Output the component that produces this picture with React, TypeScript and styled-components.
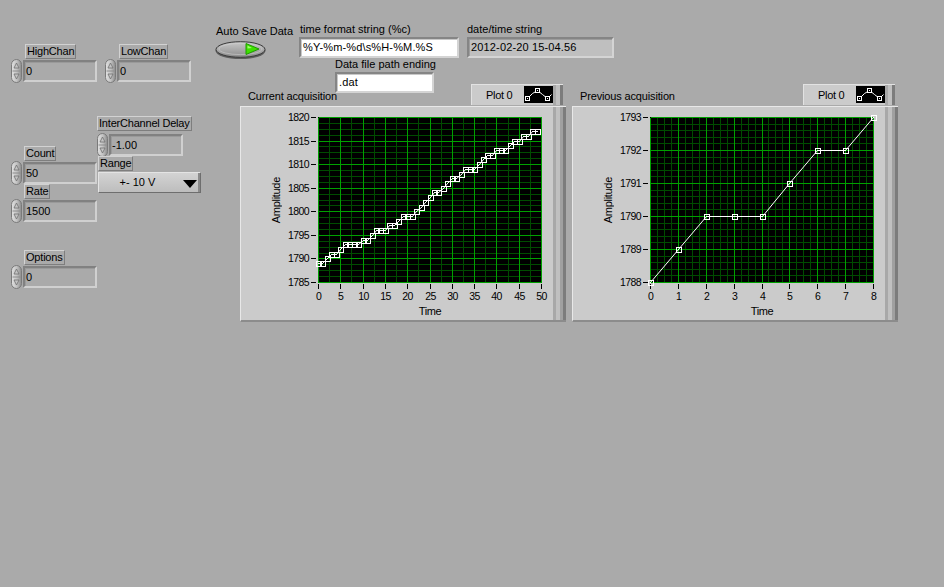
import React from "react";
import styled, { createGlobalStyle } from "styled-components";

const GlobalStyle = createGlobalStyle`
  html, body { margin: 0; padding: 0; background: #aaaaaa; }
  body { font-family: "Liberation Sans", Arial, sans-serif; font-size: 11px; color: #000; }
  * { box-sizing: border-box; }
`;

const Panel = styled.div`
  width: 944px;
  height: 587px;
  display: flex;
  align-items: flex-start;
  background: #aaaaaa;
  overflow: hidden;
`;

/* ---------- left numeric controls ---------- */
const ControlsArea = styled.div`
  width: 215px;
  flex-shrink: 0;
  display: flex;
  align-items: flex-start;
`;

const ControlColumn = styled.div<{ $width: number; $padLeft?: number }>`
  width: ${(p) => p.$width}px;
  padding-left: ${(p) => p.$padLeft ?? 0}px;
  display: flex;
  flex-direction: column;
  align-items: flex-start;
`;

const ControlBlock = styled.div<{ $top: number; $left?: number }>`
  margin-top: ${(p) => p.$top}px;
  margin-left: ${(p) => p.$left ?? 0}px;
  display: flex;
  flex-direction: column;
  align-items: flex-start;
`;

const OwnedLabel = styled.div<{ $indent: number }>`
  height: 15px;
  line-height: 13px;
  padding: 0 1px;
  margin-left: ${(p) => p.$indent}px;
  border: 1px solid;
  border-color: #d2d2d2 #7e7e7e #7e7e7e #d2d2d2;
  letter-spacing: -0.2px;
  white-space: nowrap;
`;

const FieldRow = styled.div<{ $gap: number }>`
  display: flex;
  align-items: center;
  gap: 1px;
  margin-top: ${(p) => p.$gap}px;
`;

const SpinnerBox = styled.div`
  width: 11px;
  height: 24px;
  display: flex;
  svg { display: block; }
`;

const NumField = styled.div`
  width: 74px;
  height: 22px;
  background: #aaaaaa;
  border: 2px solid;
  border-color: #818181 #d0d0d0 #d0d0d0 #818181;
  box-shadow: inset 1px 1px 0 #9a9a9a;
  display: flex;
  align-items: center;
  padding-left: 1px;
  white-space: nowrap;
`;

const Ring = styled.div`
  width: 103px;
  height: 21px;
  margin-top: 1px;
  display: flex;
  align-items: stretch;
  background: linear-gradient(#d3d3d3, #bdbdbd);
  border: 1px solid;
  border-color: #e4e4e4 #6e6e6e #6e6e6e #e4e4e4;
`;

const RingText = styled.div`
  flex: 1;
  display: flex;
  align-items: center;
  justify-content: center;
  padding-bottom: 1px;
  white-space: nowrap;
`;

const RingArrow = styled.div`
  width: 24px;
  display: flex;
  align-items: center;
  justify-content: flex-end;
  padding: 3px 1px 0 0;
  border-right: 2px solid #8a8a8a;
`;

const DownTriangle = styled.div`
  width: 0;
  height: 0;
  border-left: 7px solid transparent;
  border-right: 7px solid transparent;
  border-top: 8px solid #000;
`;

/* ---------- right area ---------- */
const RightArea = styled.div`
  flex: 1;
  display: flex;
  flex-direction: column;
`;

const TopSection = styled.div`
  height: 84px;
  padding-top: 23px;
  display: flex;
  align-items: flex-start;
`;

const AutoSaveGroup = styled.div`
  width: 84px;
  margin-top: 2px;
  display: flex;
  flex-direction: column;
  align-items: flex-start;
  svg { display: block; margin-top: 3px; }
`;

const FreeLabel = styled.div<{ $left?: number }>`
  line-height: 13px;
  height: 13px;
  padding-left: ${(p) => p.$left ?? 0}px;
  white-space: nowrap;
`;

const StringGroup = styled.div<{ $width: number; $left?: number }>`
  width: ${(p) => p.$width}px;
  margin-left: ${(p) => p.$left ?? 0}px;
  display: flex;
  flex-direction: column;
  align-items: flex-start;
`;

const StringField = styled.div<{ $width: number; $indicator?: boolean; $left?: number }>`
  width: ${(p) => p.$width}px;
  height: 21px;
  margin-top: 1px;
  margin-left: ${(p) => p.$left ?? 0}px;
  background: ${(p) => (p.$indicator ? "#bfbfbf" : "#ffffff")};
  border: 2px solid;
  border-color: #858585 #d4d4d4 #d4d4d4 #858585;
  box-shadow: inset 1px 1px 0 ${(p) => (p.$indicator ? "#9c9c9c" : "#c8c8c8")};
  display: flex;
  align-items: center;
  padding: 0 0 2px 2px;
  letter-spacing: 0.15px;
  white-space: nowrap;
`;

const GraphRow = styled.div`
  display: flex;
  gap: 6px;
  margin-left: 25px;
`;

const Graph = styled.div`
  width: 326px;
  display: flex;
  flex-direction: column;
`;

const GraphHeader = styled.div`
  height: 22px;
  display: flex;
  justify-content: space-between;
  align-items: flex-end;
  padding: 0 3px 0 8px;
`;

const GraphTitle = styled.div`
  line-height: 13px;
  margin-bottom: 3px;
  letter-spacing: -0.15px;
  white-space: nowrap;
`;

const Legend = styled.div`
  width: 92px;
  height: 21px;
  margin-bottom: 1px;
  display: flex;
  background: #cbcbcb;
  border-top: 1px solid #e2e2e2;
  border-left: 1px solid #e2e2e2;
`;

const LegendName = styled.div`
  flex: 1;
  display: flex;
  align-items: center;
  padding-left: 14px;
  letter-spacing: -0.3px;
  white-space: nowrap;
`;

const LegendIcon = styled.div`
  width: 29px;
  height: 17px;
  margin-top: 1px;
  background: #000;
  svg { display: block; }
`;

const EdgeStrip = styled.div<{ $width: number }>`
  width: ${(p) => p.$width}px;
  flex-shrink: 0;
  background: linear-gradient(
    to right,
    #a8a8a8 0 3px,
    #c0c0c0 3px 7px,
    #a0a0a0 7px ${(p) => p.$width - 3}px,
    #7c7c7c ${(p) => p.$width - 3}px
  );
`;

const GraphFrame = styled.div`
  width: 326px;
  height: 216px;
  display: flex;
  background: #cbcbcb;
  border-top: 1px solid #e8e8e8;
  border-left: 1px solid #e8e8e8;
  border-bottom: 2px solid #8c8c8c;
`;

const FrameBody = styled.div`
  width: 312px;
  display: flex;
  flex-direction: column;
`;

const ChartRow = styled.div`
  display: flex;
  height: 196px;
  svg { display: block; }
`;

const AxisTitleY = styled.div`
  width: 44px;
  height: 196px;
  padding: 10px 2px 20px 0;
  display: flex;
  align-items: center;
  justify-content: flex-end;
  span {
    writing-mode: vertical-rl;
    transform: rotate(180deg);
    line-height: 13px;
    letter-spacing: -0.3px;
    white-space: nowrap;
  }
`;

const AxisTitleX = styled.div`
  margin-top: 2px;
  margin-left: 77px;
  width: 224px;
  line-height: 13px;
  text-align: center;
  letter-spacing: -0.4px;
`;

/* ---------- drawings ---------- */
const Spinner = () => (
  <SpinnerBox>
    <svg width="11" height="24" viewBox="0 0 11 24">
      <defs>
        <linearGradient id="spinGrad" x1="0" y1="0" x2="1" y2="0">
          <stop offset="0" stopColor="#e2e2e2" />
          <stop offset="0.55" stopColor="#c0c0c0" />
          <stop offset="1" stopColor="#8a8a8a" />
        </linearGradient>
      </defs>
      <rect x="0.5" y="0.5" width="10" height="23" rx="5" fill="url(#spinGrad)" stroke="#7a7a7a" />
      <line x1="1.5" y1="12" x2="9.5" y2="12" stroke="#8c8c8c" />
      <path d="M5.5 4 L8 9 L3 9 Z" fill="#c4c4c4" stroke="#707070" strokeWidth="0.8" />
      <path d="M5.5 20 L8 15 L3 15 Z" fill="#c4c4c4" stroke="#707070" strokeWidth="0.8" />
    </svg>
  </SpinnerBox>
);

const AutoSaveButton = () => (
  <svg width="52" height="19" viewBox="0 0 52 19">
    <defs>
      <linearGradient id="btnGrad" x1="0" y1="0" x2="0" y2="1">
        <stop offset="0" stopColor="#c8c8c8" />
        <stop offset="0.6" stopColor="#a4a4a4" />
        <stop offset="1" stopColor="#8a8a8a" />
      </linearGradient>
    </defs>
    <ellipse cx="25.5" cy="9.8" rx="25" ry="8.3" fill="#5e5e5e" />
    <ellipse cx="25.5" cy="8.5" rx="24.5" ry="7.8" fill="url(#btnGrad)" stroke="#3a3a3a" />
    <ellipse cx="25.5" cy="8" rx="21.5" ry="5.6" fill="none" stroke="#d2d2d2" strokeOpacity="0.55" />
    <polygon points="31,2.5 44,8 31,13.5" fill="#3ee000" stroke="#1f9a00" strokeWidth="1" />
    <polygon points="32.5,4.5 37,7 32.5,7.5" fill="#9dff6a" />
  </svg>
);

const LegendGlyph = () => (
  <svg width="29" height="17" viewBox="0 0 29 17">
    <polyline points="3.5,12.5 8.5,7.5 13.5,4.5 18.5,8.5 23.5,12.5 27.5,8.5" fill="none" stroke="#fff" strokeWidth="1" />
    <rect x="1.5" y="10.5" width="4" height="4" fill="#000" stroke="#fff" />
    <rect x="11.5" y="2.5" width="4" height="4" fill="#000" stroke="#fff" />
    <rect x="21.5" y="10.5" width="4" height="4" fill="#000" stroke="#fff" />
    <rect x="3" y="12" width="1" height="1" fill="#fff" />
    <rect x="13" y="4" width="1" height="1" fill="#fff" />
    <rect x="23" y="12" width="1" height="1" fill="#fff" />
  </svg>
);

type ChartProps = {
  xMax: number;
  xStep: number;
  xMinorDiv: number;
  yMin: number;
  yMax: number;
  yStep: number;
  yMinorDiv: number;
  data: number[];
};

const SW = 268;
const SH = 196;
const PX = 33;
const PY = 10;
const PW = 224;
const PH = 166;
const MAJOR = "#00a000";
const MINOR = "#004c00";

function Chart({ xMax, xStep, xMinorDiv, yMin, yMax, yStep, yMinorDiv, data }: ChartProps) {
  const xp = (x: number) => PX + Math.round((x / xMax) * (PW - 1)) + 0.5;
  const yp = (y: number) => PY + Math.round(((yMax - y) / (yMax - yMin)) * (PH - 1)) + 0.5;

  const xLines: { v: number; major: boolean }[] = [];
  const xCount = Math.round(xMax / xStep) * xMinorDiv;
  for (let i = 0; i <= xCount; i++) xLines.push({ v: (i * xStep) / xMinorDiv, major: i % xMinorDiv === 0 });
  const yLines: { v: number; major: boolean }[] = [];
  const yCount = Math.round((yMax - yMin) / yStep) * yMinorDiv;
  for (let i = 0; i <= yCount; i++) yLines.push({ v: yMin + (i * yStep) / yMinorDiv, major: i % yMinorDiv === 0 });

  const pts = data.map((v, i) => [xp(i), yp(v)] as const);
  const left = PX + 0.5;
  const right = PX + PW - 0.5;
  const top = PY + 0.5;
  const bottom = PY + PH - 0.5;

  return (
    <svg width={SW} height={SH} viewBox={`0 0 ${SW} ${SH}`} shapeRendering="crispEdges">
      <rect x={PX} y={PY} width={PW} height={PH} fill="#000" />
      {xLines.filter((l) => !l.major).map((l, i) => (
        <line key={`xm${i}`} x1={xp(l.v)} y1={top} x2={xp(l.v)} y2={bottom} stroke={MINOR} />
      ))}
      {yLines.filter((l) => !l.major).map((l, i) => (
        <line key={`ym${i}`} x1={left} y1={yp(l.v)} x2={right} y2={yp(l.v)} stroke={MINOR} />
      ))}
      {xLines.filter((l) => l.major).map((l, i) => (
        <line key={`xM${i}`} x1={xp(l.v)} y1={top} x2={xp(l.v)} y2={bottom} stroke={MAJOR} />
      ))}
      {yLines.filter((l) => l.major).map((l, i) => (
        <line key={`yM${i}`} x1={left} y1={yp(l.v)} x2={right} y2={yp(l.v)} stroke={MAJOR} />
      ))}

      {yLines.filter((l) => l.major).map((l, i) => (
        <g key={`yt${i}`}>
          <line x1={PX - 7} y1={yp(l.v)} x2={PX - 2} y2={yp(l.v)} stroke="#000" />
          <text
            x={PX - 9}
            y={yp(l.v) + 3.5}
            textAnchor="end"
            fontFamily="Liberation Sans, Arial, sans-serif"
            fontSize="10.5"
            letterSpacing="-0.6"
            shapeRendering="auto"
          >
            {Math.round(l.v)}
          </text>
        </g>
      ))}
      {xLines.filter((l) => l.major).map((l, i) => (
        <g key={`xt${i}`}>
          <line x1={xp(l.v)} y1={PY + PH + 1} x2={xp(l.v)} y2={PY + PH + 6} stroke="#000" />
          <text
            x={xp(l.v)}
            y={PY + PH + 17}
            textAnchor="middle"
            fontFamily="Liberation Sans, Arial, sans-serif"
            fontSize="10.5"
            letterSpacing="-0.6"
            shapeRendering="auto"
          >
            {Math.round(l.v)}
          </text>
        </g>
      ))}

      <polyline
        points={pts.map((p) => `${p[0]},${p[1]}`).join(" ")}
        fill="none"
        stroke="#fff"
        strokeWidth="1"
        shapeRendering="auto"
      />
      {pts.map((p, i) => (
        <g key={`pt${i}`}>
          <rect x={p[0] - 2.5} y={p[1] - 2.5} width="5" height="5" fill="none" stroke="#fff" />
          <rect x={p[0] - 0.5} y={p[1] - 0.5} width="1" height="1" fill="#fff" />
        </g>
      ))}
    </svg>
  );
}

/* ---------- composite controls ---------- */
type NumProps = { label: string; value: string; top: number; left?: number; gap?: number; indent?: number };

const NumericControl = ({ label, value, top, left, gap = 0, indent = 13 }: NumProps) => (
  <ControlBlock $top={top} $left={left}>
    <OwnedLabel $indent={indent}>{label}</OwnedLabel>
    <FieldRow $gap={gap}>
      <Spinner />
      <NumField>{value}</NumField>
    </FieldRow>
  </ControlBlock>
);

type GraphProps = { title: string } & ChartProps;

const GraphPanel = ({ title, ...chart }: GraphProps) => (
  <Graph>
    <GraphHeader>
      <GraphTitle>{title}</GraphTitle>
      <Legend>
        <LegendName>Plot 0</LegendName>
        <LegendIcon>
          <LegendGlyph />
        </LegendIcon>
        <EdgeStrip $width={10} />
      </Legend>
    </GraphHeader>
    <GraphFrame>
      <FrameBody>
        <ChartRow>
          <AxisTitleY>
            <span>Amplitude</span>
          </AxisTitleY>
          <Chart {...chart} />
        </ChartRow>
        <AxisTitleX>Time</AxisTitleX>
      </FrameBody>
      <EdgeStrip $width={13} />
    </GraphFrame>
  </Graph>
);

const currentData = [
  1789, 1789, 1790, 1791, 1791, 1792, 1793, 1793, 1793, 1793, 1794, 1794, 1795, 1796, 1796, 1796, 1797,
  1797, 1798, 1799, 1799, 1799, 1800, 1801, 1802, 1803, 1804, 1804, 1805, 1806, 1807, 1807, 1808, 1809,
  1809, 1809, 1810, 1811, 1812, 1812, 1813, 1813, 1813, 1814, 1815, 1815, 1816, 1816, 1817, 1817,
];
const previousData = [1788, 1789, 1790, 1790, 1790, 1791, 1792, 1792, 1793];

export default function App() {
  return (
    <>
      <GlobalStyle />
      <Panel>
        <ControlsArea>
          <ControlColumn $width={97} $padLeft={11}>
            <NumericControl label="HighChan" value="0" top={44} indent={14} />
            <NumericControl label="Count" value="50" top={63} />
            <NumericControl label="Rate" value="1500" top={-1} />
            <NumericControl label="Options" value="0" top={27} />
          </ControlColumn>
          <ControlColumn $width={118}>
            <NumericControl label="LowChan" value="0" top={44} left={8} indent={14} />
            <NumericControl label="InterChannel Delay" value="-1.00" top={33} gap={2} indent={0} />
            <ControlBlock $top={-1} $left={1}>
              <OwnedLabel $indent={0}>Range</OwnedLabel>
              <Ring>
                <RingText>+- 10 V</RingText>
                <RingArrow>
                  <DownTriangle />
                </RingArrow>
              </Ring>
            </ControlBlock>
          </ControlColumn>
        </ControlsArea>

        <RightArea>
          <TopSection>
            <AutoSaveGroup>
              <FreeLabel $left={1}>Auto Save Data</FreeLabel>
              <AutoSaveButton />
            </AutoSaveGroup>
            <StringGroup $width={160}>
              <FreeLabel $left={1}>time format string (%c)</FreeLabel>
              <StringField $width={160}>%Y-%m-%d\s%H-%M.%S</StringField>
              <FreeLabel $left={36}>Data file path ending</FreeLabel>
              <StringField $width={99} $left={36}>.dat</StringField>
            </StringGroup>
            <StringGroup $width={147} $left={8}>
              <FreeLabel>date/time string</FreeLabel>
              <StringField $width={147} $indicator>2012-02-20 15-04.56</StringField>
            </StringGroup>
          </TopSection>

          <GraphRow>
            <GraphPanel
              title="Current acquisition"
              xMax={50}
              xStep={5}
              xMinorDiv={2}
              yMin={1785}
              yMax={1820}
              yStep={5}
              yMinorDiv={4}
              data={currentData}
            />
            <GraphPanel
              title="Previous acquisition"
              xMax={8}
              xStep={1}
              xMinorDiv={4}
              yMin={1788}
              yMax={1793}
              yStep={1}
              yMinorDiv={5}
              data={previousData}
            />
          </GraphRow>
        </RightArea>
      </Panel>
    </>
  );
}
